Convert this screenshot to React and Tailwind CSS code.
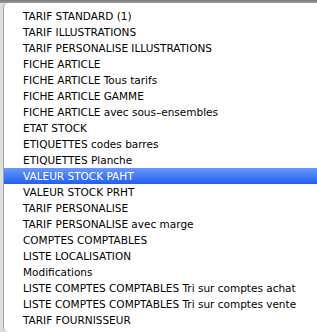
import React from "react";

const items = [
  "TARIF STANDARD (1)",
  "TARIF ILLUSTRATIONS",
  "TARIF PERSONALISE ILLUSTRATIONS",
  "FICHE ARTICLE",
  "FICHE ARTICLE Tous tarifs",
  "FICHE ARTICLE GAMME",
  "FICHE ARTICLE avec sous\u2013ensembles",
  "ETAT STOCK",
  "ETIQUETTES codes barres",
  "ETIQUETTES Planche",
  "VALEUR STOCK PAHT",
  "VALEUR STOCK PRHT",
  "TARIF PERSONALISE",
  "TARIF PERSONALISE avec marge",
  "COMPTES COMPTABLES",
  "LISTE LOCALISATION",
  "Modifications",
  "LISTE COMPTES COMPTABLES Tri sur comptes achat",
  "LISTE COMPTES COMPTABLES Tri sur comptes vente",
  "TARIF FOURNISSEUR",
];

export default function App() {
  return (
    <div className="w-[317px] h-[332px] overflow-hidden bg-[#dedede] flex flex-col font-['DejaVu_Sans',sans-serif]">
      <div className="h-[3px] shrink-0 bg-gradient-to-b from-[#7d7d7d] to-[#9a9a9a]" />
      <div className="flex-1 ml-[3px] rounded-l-[5px] border-l border-[#a3a3a3] bg-white pt-[5px] pb-[4px]">
        <ul className="flex flex-col">
          {items.map((t) =>
            t === "VALEUR STOCK PAHT" ? (
              <li
                key={t}
                className="h-4 pl-[19px] text-[10.5px] leading-4 text-white bg-gradient-to-b from-[#6a96f8] to-[#1f5ef3] whitespace-nowrap"
              >
                {t}
              </li>
            ) : (
              <li key={t} className="h-4 pl-[19px] text-[10.5px] leading-4 text-black whitespace-nowrap">
                {t}
              </li>
            )
          )}
        </ul>
      </div>
    </div>
  );
}
